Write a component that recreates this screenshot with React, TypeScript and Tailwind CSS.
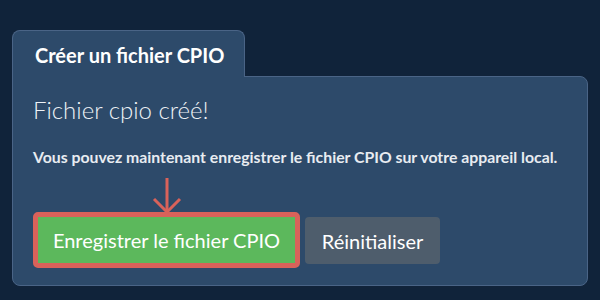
import React from "react";

export default function App() {
  return (
    <div
      className="w-[600px] h-[300px] bg-[#10233a] pt-[30px] pl-[12px] overflow-hidden"
      style={{ fontFamily: "Lato, 'Open Sans', sans-serif" }}
    >
      <div className="w-[576px]">
        <div className="relative z-10 w-[233px] h-[47px] -mb-px bg-[#2d4a6a] border border-b-0 border-[#4a6486] rounded-t-[8px] pl-[22px] pt-[12px]">
          <span className="block text-[20px] font-bold text-white leading-[24px]">Créer un fichier CPIO</span>
        </div>
        <div className="h-[210px] bg-[#2d4a6a] border border-[#4a6486] rounded-b-[8px] rounded-tr-[8px] pl-[20px] pt-[18px]">
          <div className="text-[24px] font-light text-[#eef2f6] leading-[30px]">Fichier cpio créé!</div>
          <div className="mt-[22px] text-[15.8px] font-bold text-[#e8ecf1] leading-[20px] whitespace-nowrap">
            Vous pouvez maintenant enregistrer le fichier CPIO sur votre appareil local.
          </div>
          <div className="mt-[45px] flex items-start">
            <div className="relative border-[5px] border-[#d9625a] rounded-[5px]">
              <svg
                className="absolute left-1/2 -translate-x-1/2 bottom-full mb-[3px]"
                width="30"
                height="36"
                viewBox="0 0 30 36"
                fill="none"
                stroke="#d9625a"
                strokeWidth="3"
              >
                <line x1="15" y1="0" x2="15" y2="34" />
                <polyline points="2,21 15,34 28,21" />
              </svg>
              <button className="block w-[257px] h-[46px] bg-[#5cb85c] text-white text-[20px] font-normal leading-[24px]">
                Enregistrer le fichier CPIO
              </button>
            </div>
            <button className="ml-[5px] mt-[5px] w-[135px] h-[47px] bg-[#4e5d6c] rounded-[4px] text-white text-[20px] font-normal leading-[24px]">
              Réinitialiser
            </button>
          </div>
        </div>
      </div>
    </div>
  );
}
